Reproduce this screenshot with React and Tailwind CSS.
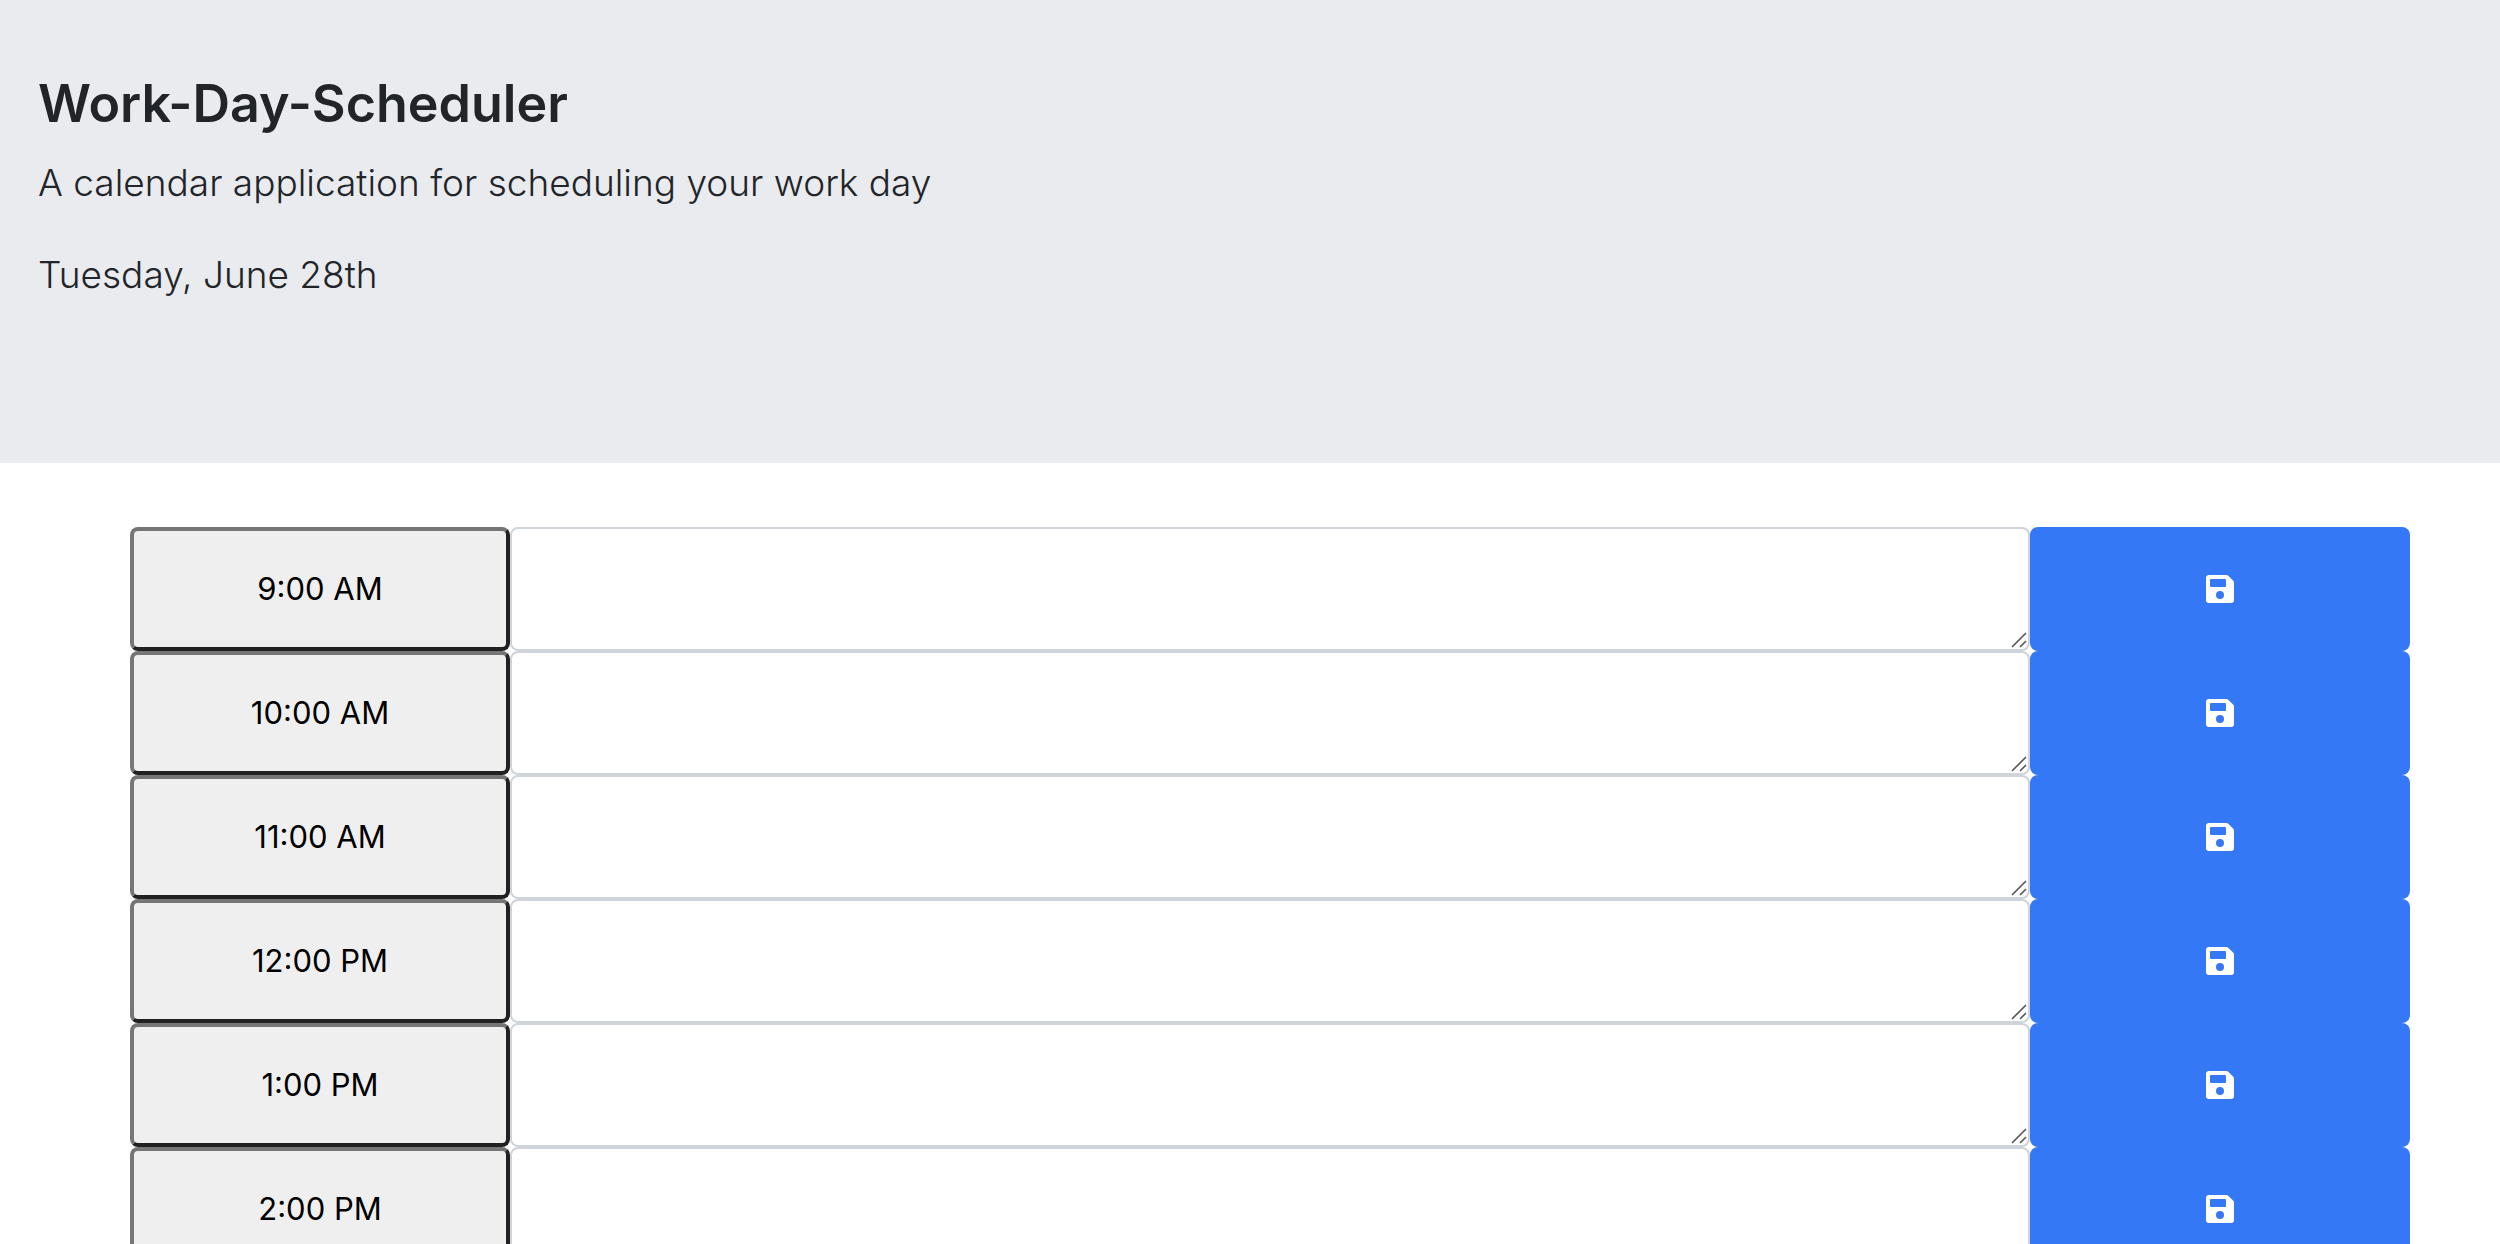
const hours = ['9:00 AM', '10:00 AM', '11:00 AM', '12:00 PM', '1:00 PM', '2:00 PM'];

function SaveIcon() {
  return (
    <svg viewBox="0 0 28 28" className="size-7" fill="currentColor" aria-hidden="true">
      <path
        fillRule="evenodd"
        d="M3 0H20.600Q21.500 0 22.200 .7L27.300 5.800Q28 6.500 28 7.400V25a3 3 0 0 1-3 3H3a3 3 0 0 1-3-3V3a3 3 0 0 1 3-3ZM5 4a1 1 0 0 0-1 1v6a1 1 0 0 0 1 1h14a1 1 0 0 0 1-1V5a1 1 0 0 0-1-1ZM14 16a4 4 0 1 0 0 8a4 4 0 1 0 0-8Z"
      />
    </svg>
  );
}

function ResizeGrip() {
  return (
    <svg
      viewBox="0 0 16 16"
      className="pointer-events-none absolute right-[3px] bottom-[3px] size-4 text-[#555555]"
      stroke="currentColor"
      strokeWidth="1.6"
      aria-hidden="true"
    >
      <path d="M1 15 15 1M9 15l6-6" />
    </svg>
  );
}

function TimeBlock({ hour }) {
  return (
    <div className="grid h-[124px] grid-cols-12">
      <button
        type="button"
        className="col-span-2 rounded-lg border-4 border-t-[#767676] border-r-[#212121] border-b-[#212121] border-l-[#767676] bg-[#efefef] text-[31px] text-black"
      >
        {hour}
      </button>
      <div className="relative col-span-8">
        <textarea
          aria-label={`Plans for ${hour}`}
          className="block size-full resize-none rounded-lg border-2 border-[#ced4da] bg-white px-6 py-3 text-[31px] outline-none"
        />
        <ResizeGrip />
      </div>
      <button
        type="button"
        aria-label={`Save ${hour}`}
        className="col-span-2 flex items-center justify-center rounded-lg bg-[#3478f6] text-white"
      >
        <SaveIcon />
      </button>
    </div>
  );
}

export default function App() {
  return (
    <div className="h-screen overflow-hidden bg-white font-['Inter',sans-serif] text-[#212529]">
      <header className="mb-16 bg-[#eaebef] px-[38px] pt-[70px] pb-[158px]">
        <h1 className="mb-4 text-[52px] leading-[67px] font-semibold">Work-Day-Scheduler</h1>
        <p className="mb-8 text-[37px] leading-[60px] font-light">
          A calendar application for scheduling your work day
        </p>
        <p className="text-[37px] leading-[60px] font-light">Tuesday, June 28th</p>
      </header>
      <main className="mr-[90px] ml-[130px]">
        {hours.map((hour) => (
          <TimeBlock key={hour} hour={hour} />
        ))}
      </main>
    </div>
  );
}
